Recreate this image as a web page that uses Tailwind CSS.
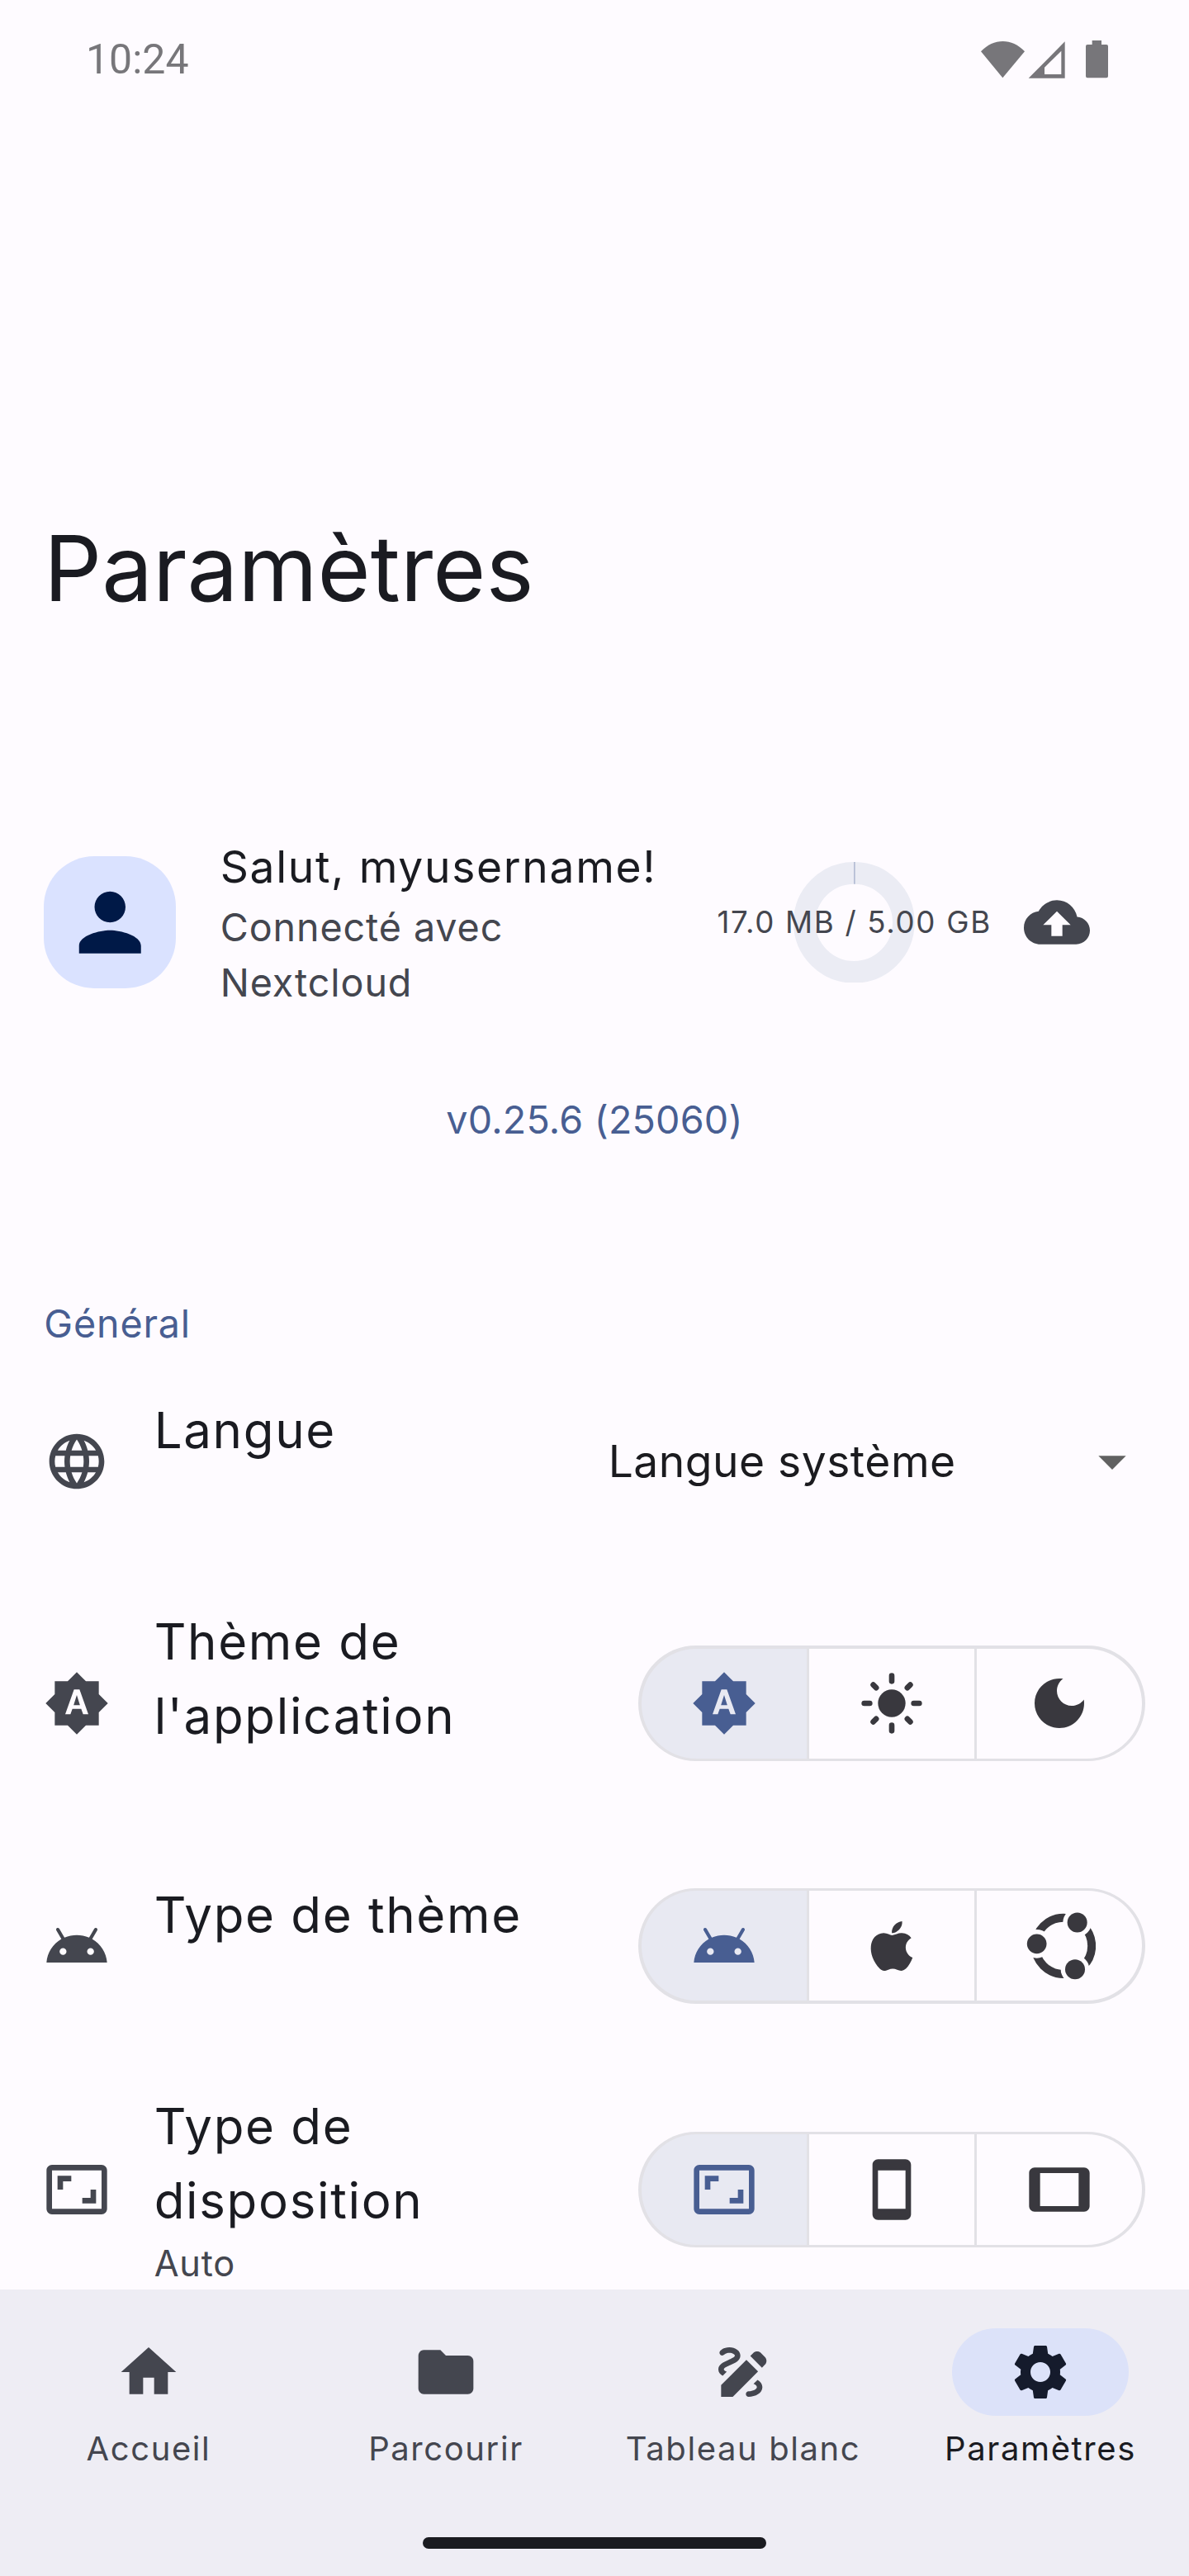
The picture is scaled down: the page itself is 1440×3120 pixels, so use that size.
<!DOCTYPE html>
<html lang="fr">
<head>
<meta charset="utf-8">
<title>Paramètres</title>
<script src="https://cdn.jsdelivr.net/npm/@tailwindcss/browser@4"></script>
</head>
<body class="h-[3120px] w-[1440px] overflow-hidden bg-[#fefbff] font-['Inter',sans-serif] text-[#1a1b21]">

<svg class="hidden">
  <symbol id="auto" viewBox="0 0 24 24"><path fill-rule="evenodd" d="M20 8.69V4h-4.69L12 .69 8.69 4H4v4.69L.69 12 4 15.31V20h4.69L12 23.31 15.31 20H20v-4.69L23.31 12 20 8.69zM14.3 16l-.7-2h-3.2l-.7 2H7.8L11 7h2l3.2 9h-1.9zM10.85 12.65h2.3L12 9l-1.15 3.65z"/></symbol>
  <symbol id="android" viewBox="0 0 24 24"><path fill-rule="evenodd" d="M17.6 9.48l1.84-3.18c.16-.31.04-.69-.26-.85-.29-.15-.65-.06-.83.22l-1.88 3.24c-2.86-1.21-6.08-1.21-8.94 0L5.65 5.67c-.19-.29-.58-.38-.87-.2-.28.18-.37.54-.22.83L6.4 9.48C3.3 11.25 1.28 14.44 1 18h22c-.28-3.56-2.3-6.75-5.4-8.52zM7 15.25a1.25 1.25 0 1 1 0-2.5 1.25 1.25 0 0 1 0 2.5zM17 15.25a1.25 1.25 0 1 1 0-2.5 1.25 1.25 0 0 1 0 2.5z"/></symbol>
  <symbol id="aspect" viewBox="0 0 24 24"><path d="M19 12h-2v3h-3v2h5v-5zM7 9h3V7H5v5h2V9zm14-6H3c-1.1 0-2 .9-2 2v14c0 1.1.9 2 2 2h18c1.1 0 2-.9 2-2V5c0-1.1-.9-2-2-2zm0 16.01H3V4.99h18v14.02z"/></symbol>
</svg>

<main class="h-[2773px] overflow-hidden">
  <div class="flex h-[144px] items-center justify-between pl-[104px] pr-[80px] text-[#77767a]">
    <span class="font-[Roboto] text-[50px] leading-[60px]">10:24</span>
    <svg class="h-[64px] w-[180px] fill-current" viewBox="0 0 540 192">
      <path d="M24 67C70 18 137 18 183 67L103 163z"/>
      <path fill-rule="evenodd" d="M197 164L329 31V164zM255 125V150H316V65z"/>
      <path d="M428 27h34v15h18q6 0 6 6v109q0 6-6 6h-69q-6 0-6-6V48q0-6 6-6h17z"/>
    </svg>
  </div>

  <h1 class="mt-[477.4px] pl-[53px] text-[110px] leading-[134px]">Paramètres</h1>

  <section class="mt-[254.8px] flex h-[213.3px] items-center pl-[53.33px] pr-[120px]">
    <div class="flex size-[160px] items-center justify-center rounded-[61px] bg-[#dae2ff] text-[#001947]">
      <svg class="size-[112.5px] fill-current" viewBox="0 0 24 24"><path d="M12 12c2.21 0 4-1.79 4-4s-1.79-4-4-4-4 1.79-4 4 1.79 4 4 4zm0 2c-2.67 0-8 1.34-8 4v2h16v-2c0-2.66-5.33-4-8-4z"/></svg>
    </div>
    <div class="ml-[53.33px] flex-1">
      <p class="text-[53.33px] leading-[80px] tracking-[1.67px] whitespace-nowrap">Salut, myusername!</p>
      <p class="text-[46.67px] leading-[66.67px] tracking-[0.9px] text-[#44464f]">Connecté avec<br>Nextcloud</p>
    </div>
    <div class="relative flex size-[146.67px] items-center justify-center">
      <svg class="size-full" viewBox="0 0 146.67 146.67"><circle cx="73.33" cy="73.33" r="60" fill="none" stroke="#ebecf4" stroke-width="26.67"/><path d="M73.9 0v26.67" stroke="#a3aeca" stroke-width="1.3"/></svg>
      <span class="absolute text-[36.67px] leading-[53px] tracking-[1.67px] whitespace-nowrap text-[#44464f]">17.0 MB / 5.00 GB</span>
    </div>
    <svg class="ml-[132px] size-[80px] fill-[#44464f]" viewBox="0 0 24 24"><path d="M19.35 10.04C18.67 6.59 15.64 4 12 4 9.11 4 6.6 5.64 5.35 8.04 2.34 8.36 0 10.91 0 14c0 3.31 2.69 6 6 6h13c2.76 0 5-2.24 5-5 0-2.64-2.05-4.78-4.65-4.96zM14 13v4h-4v-4H7l5-5 5 5h-3z"/></svg>
  </section>

  <p class="mt-[99.1px] text-center text-[46.67px] leading-[66.67px] tracking-[0.2px] text-[#485e92]">v0.25.6 (25060)</p>
  <h2 class="mt-[180.3px] pl-[53.33px] text-[46.67px] leading-[66.67px] tracking-[0.83px] text-[#485e92]">Général</h2>

  <div class="flex h-[267px] items-center px-[53.33px]">
    <svg class="size-[80px] fill-[#44464f]" viewBox="0 0 24 24"><path d="M11.99 2C6.47 2 2 6.48 2 12s4.47 10 9.99 10C17.52 22 22 17.52 22 12S17.52 2 11.99 2zm6.93 6h-2.95c-.32-1.25-.78-2.45-1.38-3.56 1.84.63 3.37 1.91 4.33 3.56zM12 4.04c.83 1.2 1.48 2.53 1.91 3.96h-3.82c.43-1.43 1.08-2.76 1.91-3.96zM4.26 14C4.1 13.36 4 12.69 4 12s.1-1.36.26-2h3.38c-.08.66-.14 1.32-.14 2 0 .68.06 1.34.14 2H4.26zm.82 2h2.95c.32 1.25.78 2.45 1.38 3.56-1.84-.63-3.37-1.9-4.33-3.56zm2.95-8H5.08c.96-1.66 2.49-2.93 4.33-3.56C8.81 5.55 8.35 6.75 8.03 8zM12 19.96c-.83-1.2-1.48-2.53-1.91-3.96h3.82c-.43 1.43-1.08 2.76-1.91 3.96zM14.34 14H9.66c-.09-.66-.16-1.32-.16-2 0-.68.07-1.35.16-2h4.68c.09.65.16 1.32.16 2 0 .68-.07 1.34-.16 2zm.25 5.56c.6-1.11 1.06-2.31 1.38-3.56h2.95c-.96 1.65-2.49 2.93-4.33 3.56zM16.36 14c.08-.66.14-1.32.14-2 0-.68-.06-1.34-.14-2h3.38c.16.64.26 1.31.26 2s-.1 1.36-.26 2h-3.38z"/></svg>
    <div class="ml-[53.33px] flex-1">
      <p class="text-[60px] leading-[90px] tracking-[1.67px]">Langue</p>
      <div class="h-[75px]"></div>
    </div>
    <div class="flex w-[650px] items-center justify-between">
      <span class="text-[53.33px] leading-[80px] tracking-[0.5px] text-[#1b1b1f]">Langue système</span>
      <svg class="size-[80px] fill-[#616161]" viewBox="0 0 24 24"><path d="M7 10l5 5 5-5z"/></svg>
    </div>
  </div>

  <div class="flex h-[320px] items-center px-[53.33px]">
    <svg class="size-[80px] fill-[#44464f]"><use href="#auto"/></svg>
    <div class="ml-[53.33px] flex-1">
      <p class="text-[60px] leading-[90px] tracking-[1.67px]">Thème de<br>l'application</p>
      <div class="h-[60px]"></div>
    </div>
    <div class="h-[140px] w-[613.33px] rounded-full bg-[#e2e1e6] p-[3.33px]">
      <div class="flex h-full gap-[3.33px] overflow-hidden rounded-full">
        <div class="flex flex-1 items-center justify-center bg-[#e8e9f2]"><svg class="size-[80px] fill-[#485e92]"><use href="#auto"/></svg></div>
        <div class="flex flex-1 items-center justify-center bg-[#fefbff]"><svg class="size-[80px] fill-[#39383e] stroke-[#39383e]" viewBox="0 0 24 24"><circle cx="12" cy="12" r="5" stroke="none"/><path stroke-width="2" stroke-linecap="round" d="M12 2v2M12 20v2M2 12h2M20 12h2M5.28 5.28l1.06 1.06M17.66 17.66l1.06 1.06M5.28 18.72l1.06-1.06M17.66 6.34l1.06-1.06"/></svg></div>
        <div class="flex flex-1 items-center justify-center bg-[#fefbff]"><svg class="size-[80px] fill-[#39383e]" viewBox="0 0 24 24"><path d="M12 3c-4.97 0-9 4.03-9 9s4.03 9 9 9 9-4.03 9-9c0-.46-.04-.92-.1-1.36-.98 1.37-2.58 2.26-4.4 2.26-2.98 0-5.4-2.42-5.4-5.4 0-1.81.89-3.42 2.26-4.4C12.92 3.04 12.46 3 12 3z"/></svg></div>
      </div>
    </div>
  </div>

  <div class="flex h-[266.8px] items-center px-[53.33px]">
    <svg class="size-[80px] fill-[#44464f]"><use href="#android"/></svg>
    <div class="ml-[53.33px] flex-1">
      <p class="text-[60px] leading-[90px] tracking-[1.67px] whitespace-nowrap">Type de thème</p>
      <div class="h-[75px]"></div>
    </div>
    <div class="h-[140px] w-[613.33px] rounded-full bg-[#e2e1e6] p-[3.33px]">
      <div class="flex h-full gap-[3.33px] overflow-hidden rounded-full">
        <div class="flex flex-1 items-center justify-center bg-[#e8e9f2]"><svg class="size-[80px] fill-[#485e92]"><use href="#android"/></svg></div>
        <div class="flex flex-1 items-center justify-center bg-[#fefbff]"><svg class="size-[80px] fill-[#39383e]" viewBox="0 0 24 24"><path d="M17.05 20.28c-.98.95-2.05.8-3.08.35-1.09-.46-2.09-.48-3.24 0-1.44.62-2.2.44-3.06-.35C2.79 15.25 3.51 7.59 9.05 7.31c1.35.07 2.29.74 3.08.8 1.18-.24 2.31-.93 3.57-.84 1.51.12 2.65.72 3.4 1.8-3.12 1.87-2.38 5.98.48 7.13-.57 1.5-1.31 2.99-2.54 4.09l.01-.01zM12.03 7.25c-.15-2.23 1.66-4.07 3.74-4.25.29 2.58-2.34 4.5-3.74 4.25z"/></svg></div>
        <div class="flex flex-1 items-center justify-center bg-[#fefbff]"><svg class="size-[88px] fill-[#39383e]" viewBox="-3 39 264 264"><circle cx="144" cy="170.5" r="102.5" fill="none" stroke="#39383e" stroke-width="30"/><g fill="#fefbff"><circle cx="194" cy="85.5" r="52"/><circle cx="47" cy="163" r="52"/><circle cx="186" cy="255.5" r="52"/></g><circle cx="194" cy="85.5" r="36"/><circle cx="47" cy="163" r="35.5"/><circle cx="186" cy="255.5" r="36"/></svg></div>
      </div>
    </div>
  </div>

  <div class="flex h-[324px] items-center px-[53.33px]">
    <svg class="size-[80px] fill-[#44464f]"><use href="#aspect"/></svg>
    <div class="ml-[53.33px] flex-1">
      <p class="text-[60px] leading-[90px] tracking-[1.67px]">Type de<br>disposition</p>
      <p class="h-[65px] text-[43.33px] leading-[62px] tracking-[0.8px] text-[#44464f]">Auto</p>
    </div>
    <div class="h-[140px] w-[613.33px] rounded-full bg-[#e2e1e6] p-[3.33px]">
      <div class="flex h-full gap-[3.33px] overflow-hidden rounded-full">
        <div class="flex flex-1 items-center justify-center bg-[#e8e9f2]"><svg class="size-[80px] fill-[#485e92]"><use href="#aspect"/></svg></div>
        <div class="flex flex-1 items-center justify-center bg-[#fefbff]"><svg class="size-[80px] fill-[#39383e]" viewBox="0 0 24 24"><path d="M17 1.01L7 1c-1.1 0-2 .9-2 2v18c0 1.1.9 2 2 2h10c1.1 0 2-.9 2-2V3c0-1.1-.9-1.99-2-1.99zM17 19H7V5h10v14z"/></svg></div>
        <div class="flex flex-1 items-center justify-center bg-[#fefbff]"><svg class="size-[80px] fill-[#39383e]" viewBox="0 0 24 24"><path d="M21 4H3c-1.1 0-2 .9-2 2v12c0 1.1.9 2 2 2h18c1.1 0 1.99-.9 1.99-2L23 6c0-1.1-.9-2-2-2zm-2 14H5V6h14v12z"/></svg></div>
      </div>
    </div>
  </div>
</main>

<nav class="h-[347px] bg-[#eeedf4] pt-[46.7px]">
  <div class="grid grid-cols-4 text-[40px] leading-[53.33px] tracking-[1.6px] text-[#44464f]">
    <a class="flex flex-col items-center gap-[12.5px]">
      <span class="flex h-[106.67px] w-[213.33px] items-center justify-center"><svg class="size-[80px] fill-current" viewBox="0 0 24 24"><path d="M10 20v-6h4v6h5v-8h3L12 3 2 12h3v8z"/></svg></span>
      <span>Accueil</span>
    </a>
    <a class="flex flex-col items-center gap-[12.5px]">
      <span class="flex h-[106.67px] w-[213.33px] items-center justify-center"><svg class="size-[80px] fill-current" viewBox="0 0 24 24"><path d="M10 4H4c-1.1 0-1.99.9-1.99 2L2 18c0 1.1.9 2 2 2h16c1.1 0 2-.9 2-2V8c0-1.1-.9-2-2-2h-8l-2-2z"/></svg></span>
      <span>Parcourir</span>
    </a>
    <a class="flex flex-col items-center gap-[12.5px]">
      <span class="flex h-[106.67px] w-[213.33px] items-center justify-center"><svg class="size-[80px] fill-current" viewBox="0 0 24 24"><path d="M18.85 10.39l1.06-1.06c.78-.78.78-2.05 0-2.83L18.5 5.09c-.78-.78-2.05-.78-2.83 0l-1.06 1.06 4.24 4.24zm-5.66-2.83L4 16.76V21h4.24l9.19-9.19-4.24-4.25zM19 17.5c0 2.19-2.54 3.5-5 3.5-.55 0-1-.45-1-1s.45-1 1-1c1.54 0 3-.73 3-1.5 0-.47-.48-.87-1.23-1.2l1.48-1.48c1.07.63 1.75 1.47 1.75 2.68zM4.58 13.35C3.61 12.79 3 12.06 3 11c0-1.8 1.89-2.63 3.56-3.36C7.59 7.18 9 6.56 9 6c0-.41-.78-1-2-1-1.26 0-1.8.61-1.83.64-.35.41-.98.46-1.4.12-.41-.34-.49-.95-.15-1.38C3.73 4.24 4.76 3 7 3s4 1.32 4 3c0 1.87-1.93 2.72-3.64 3.47C6.42 9.88 5 10.5 5 11c0 .31.43.6 1.07.86l-1.49 1.49z"/></svg></span>
      <span>Tableau blanc</span>
    </a>
    <a class="flex flex-col items-center gap-[12.5px] text-[#1a1b21]">
      <span class="flex h-[106.67px] w-[213.33px] items-center justify-center rounded-full bg-[#dce2f9] text-[#151b2c]"><svg class="size-[80px] fill-current" viewBox="0 0 24 24"><path d="M19.14 12.94c.04-.3.06-.61.06-.94 0-.32-.02-.64-.07-.94l2.03-1.58c.18-.14.23-.41.12-.61l-1.92-3.32c-.12-.22-.37-.29-.59-.22l-2.39.96c-.5-.38-1.03-.7-1.62-.94l-.36-2.54c-.04-.24-.24-.41-.48-.41h-3.84c-.24 0-.43.17-.47.41l-.36 2.54c-.59.24-1.13.57-1.62.94l-2.39-.96c-.22-.08-.47 0-.59.22L2.74 8.87c-.12.21-.08.47.12.61l2.03 1.58c-.05.3-.09.63-.09.94s.02.64.07.94l-2.03 1.58c-.18.14-.23.41-.12.61l1.92 3.32c.12.22.37.29.59.22l2.39-.96c.5.38 1.03.7 1.62.94l.36 2.54c.05.24.24.41.48.41h3.84c.24 0 .44-.17.47-.41l.36-2.54c.59-.24 1.13-.56 1.62-.94l2.39.96c.22.08.47 0 .59-.22l1.92-3.32c.12-.22.07-.47-.12-.61l-2.01-1.58zM12 15.6c-1.98 0-3.6-1.62-3.6-3.6s1.62-3.6 3.6-3.6 3.6 1.62 3.6 3.6-1.62 3.6-3.6 3.6z"/></svg></span>
      <span>Paramètres</span>
    </a>
  </div>
  <div class="mx-auto mt-[80.8px] h-[14px] w-[416px] rounded-[7px] bg-[#1a1b20]"></div>
</nav>
</body>
</html>
